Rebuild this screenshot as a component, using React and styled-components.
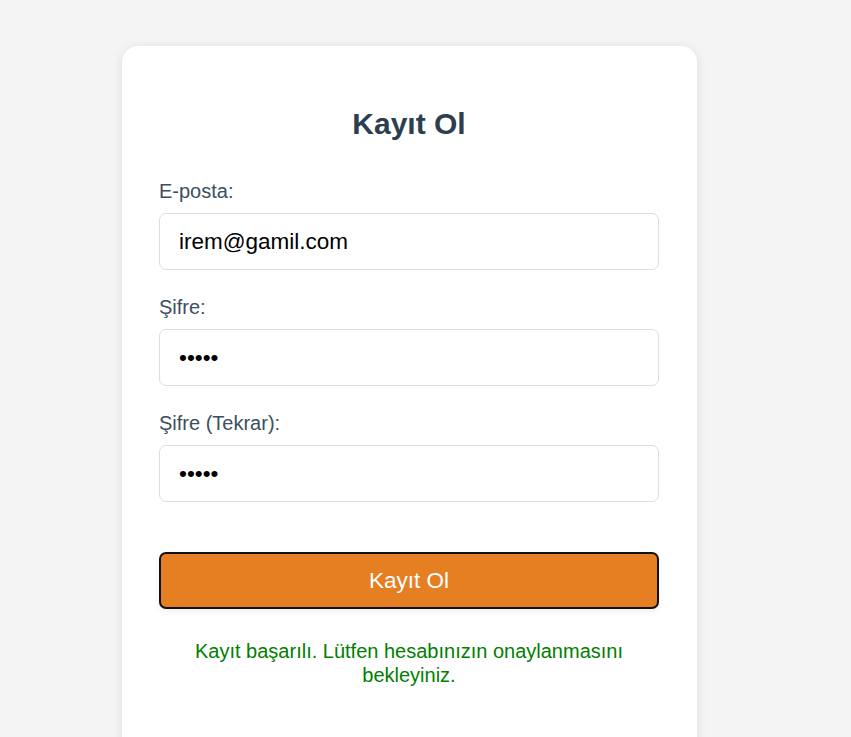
import React from 'react'
import styled, { createGlobalStyle } from 'styled-components'

const GlobalStyle = createGlobalStyle`
  body {
    margin: 0;
    background: #f4f4f4;
    font-family: "Liberation Sans", Arial, sans-serif;
  }
`

const Page = styled.div`
  display: flex;
  justify-content: center;
  padding: 46px 33px 0 0;
  min-height: 737px;
  box-sizing: border-box;
`

const Card = styled.div`
  width: 575px;
  box-sizing: border-box;
  background: #fff;
  border-radius: 16px;
  padding: 61px 37.5px 40px;
  box-shadow: 0 2px 12px rgba(0, 0, 0, 0.1);
  height: 720px;
`

const Title = styled.h2`
  margin: 0 0 38.5px;
  text-align: center;
  font-size: 30px;
  line-height: 34.5px;
  font-weight: bold;
  color: #2c3e50;
`

const Field = styled.div`
  display: flex;
  flex-direction: column;
  margin-bottom: ${p => p.$last ? '50px' : '26px'};
`

const Label = styled.label`
  font-size: 20px;
  line-height: 23px;
  color: #3c4f60;
  margin-bottom: 10px;
`

const Input = styled.input`
  height: 57px;
  box-sizing: border-box;
  border: 1px solid #ddd;
  border-radius: 7px;
  padding: 0 19px;
  font-family: "Liberation Sans", Arial, sans-serif;
  font-size: 22.5px;
  color: #000;
  outline: none;
`

const Button = styled.button`
  width: 100%;
  height: 57px;
  background: #e67e22;
  border: 2px solid #111;
  border-radius: 7px;
  color: #fff;
  font-family: "Liberation Sans", Arial, sans-serif;
  font-size: 22.5px;
  box-shadow: 0 3px 6px rgba(0, 0, 0, 0.06);
`

const Message = styled.p`
  margin: 30px 0 0;
  text-align: center;
  color: #008000;
  font-size: 20px;
  line-height: 24px;
  padding: 0 20px;
`

export default function App() {
  return (
    <>
      <GlobalStyle />
      <Page>
        <Card>
          <Title>Kayıt Ol</Title>
          <Field>
            <Label>E-posta:</Label>
            <Input type="email" defaultValue="irem@gamil.com" />
          </Field>
          <Field>
            <Label>Şifre:</Label>
            <Input type="password" defaultValue="12345" />
          </Field>
          <Field $last>
            <Label>Şifre (Tekrar):</Label>
            <Input type="password" defaultValue="12345" />
          </Field>
          <Button>Kayıt Ol</Button>
          <Message>Kayıt başarılı. Lütfen hesabınızın onaylanmasını bekleyiniz.</Message>
        </Card>
      </Page>
    </>
  )
}
